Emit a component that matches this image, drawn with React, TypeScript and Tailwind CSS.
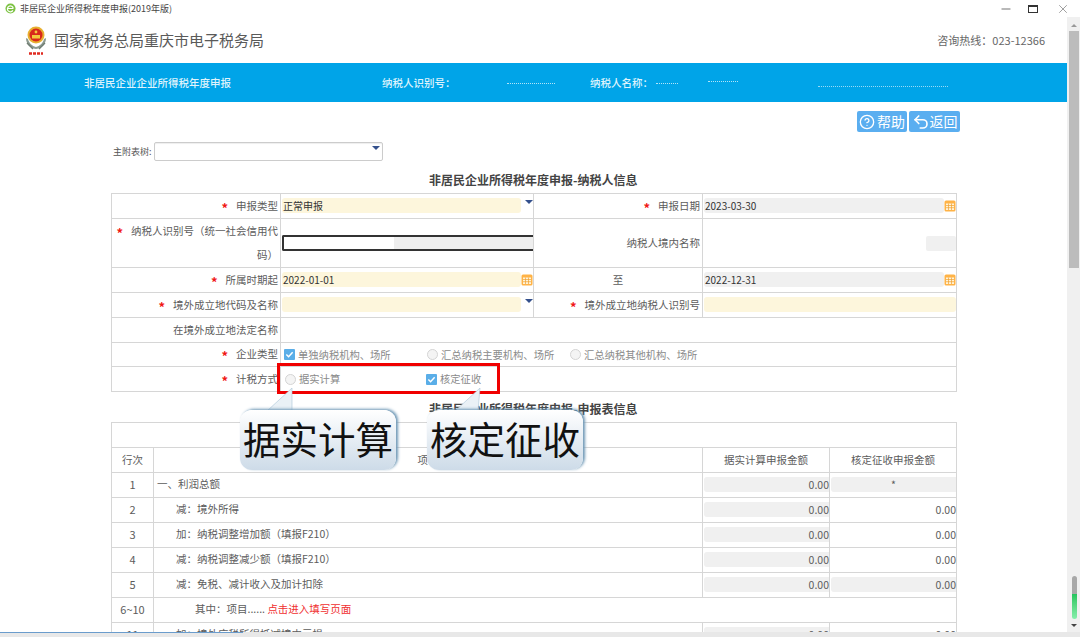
import { CircleHelp, Undo2, Minus, X } from 'lucide-react';
import type { ReactNode } from 'react';

const font = { fontFamily: '"Microsoft YaHei", "Noto Sans CJK SC", "Noto Sans", sans-serif' };

function Star() {
    return <span className="mr-[8px] inline-block align-[-3px] text-[13px] font-bold leading-none text-[#f01818]">*</span>;
}

function Calendar() {
    return (
        <svg viewBox="0 0 12 12" className="h-3 w-3 shrink-0">
            <rect x="0.5" y="0.5" width="11" height="11" rx="1.5" fill="#ffb347" />
            <rect x="2" y="3.5" width="8" height="6.5" fill="#fff3d8" />
            <path d="M2 5.5h8M2 7.7h8M4.5 3.5v6.5M7.5 3.5v6.5" stroke="#f0a030" strokeWidth="0.7" />
        </svg>
    );
}

function Caret() {
    return <span className="mb-2 ml-1 h-0 w-0 shrink-0 border-x-[4px] border-t-[4px] border-x-transparent border-t-[#34508c]" />;
}

function Field({ tone, children, tail }: { tone: 'yellow' | 'gray'; children?: ReactNode; tail?: ReactNode }) {
    return (
        <div className="flex items-center pb-[1px] pl-[1px]">
            <div className={`h-[15px] flex-1 truncate rounded-[3px] pl-[1px] text-[10px] leading-[15px] text-[#333] ${tone === 'yellow' ? 'bg-[#fdf6dc]' : 'bg-[#f0f0f0]'}`}>
                {children}
            </div>
            {tail}
        </div>
    );
}

function Check({ on, label, className = '' }: { on?: boolean; label: string; className?: string }) {
    return (
        <span className={`inline-flex items-center gap-[3px] text-[10.3px] text-[#8a8a8a] ${className}`}>
            {on ? (
                <span className="flex h-[11px] w-[11px] items-center justify-center rounded-[1px] bg-[#5aaee8]">
                    <svg viewBox="0 0 10 10" className="h-[9px] w-[9px]">
                        <path d="M1.5 5l2.5 2.5L8.5 2.5" stroke="#fff" strokeWidth="1.6" fill="none" />
                    </svg>
                </span>
            ) : (
                <span className="h-[11px] w-[11px] rounded-full border border-[#d4d4d4] bg-[#f4f4f4]" />
            )}
            {label}
        </span>
    );
}

const labelCell = 'border-[1.5px] border-[#d6d6d6] pr-[2px] text-right align-middle text-[10.5px] text-[#5c5c5c]';
const fieldCell = 'border-[1.5px] border-[#d6d6d6] p-0 align-middle';

function InfoTable() {
    return (
        <table className="ml-[111px] w-[845px] table-fixed border-collapse">
            <colgroup>
                <col className="w-[169px]" />
                <col className="w-[253px]" />
                <col className="w-[169px]" />
                <col className="w-[254px]" />
            </colgroup>
            <tbody>
                <tr className="h-[25px]">
                    <td className={labelCell}><Star />申报类型</td>
                    <td className={fieldCell}><Field tone="yellow" tail={<Caret />}>正常申报</Field></td>
                    <td className={labelCell}><Star />申报日期</td>
                    <td className={fieldCell}><Field tone="gray" tail={<Calendar />}>2023-03-30</Field></td>
                </tr>
                <tr className="h-[49px]">
                    <td className={`${labelCell} leading-[24px]`}><Star />纳税人识别号（统一社会信用代码）</td>
                    <td className={fieldCell}>
                        <div className="ml-[1px] flex h-[16px] rounded-l-[2px] border-y-2 border-l-2 border-[#333] bg-[#eeeeee]">
                            <div className="w-[110px] bg-white" />
                        </div>
                    </td>
                    <td className={labelCell}>纳税人境内名称</td>
                    <td className={fieldCell}>
                        <div className="ml-[1px] flex h-[15px] justify-end bg-white">
                            <div className="w-[30px] rounded-[2px] bg-[#f0f0f0]" />
                        </div>
                    </td>
                </tr>
                <tr className="h-[25px]">
                    <td className={labelCell}><Star />所属时期起</td>
                    <td className={fieldCell}><Field tone="yellow" tail={<Calendar />}>2022-01-01</Field></td>
                    <td className={`${labelCell} !pr-0 !text-center`}>至</td>
                    <td className={fieldCell}><Field tone="gray" tail={<Calendar />}>2022-12-31</Field></td>
                </tr>
                <tr className="h-[25px]">
                    <td className={labelCell}><Star />境外成立地代码及名称</td>
                    <td className={fieldCell}><Field tone="yellow" tail={<Caret />} /></td>
                    <td className={labelCell}><Star />境外成立地纳税人识别号</td>
                    <td className={fieldCell}><Field tone="yellow" /></td>
                </tr>
                <tr className="h-[25px]">
                    <td className={labelCell}>在境外成立地法定名称</td>
                    <td colSpan={3} className={fieldCell} />
                </tr>
                <tr className="h-[24px]">
                    <td className={`${labelCell} pb-[1px]`}><Star />企业类型</td>
                    <td colSpan={3} className={fieldCell}>
                        <div className="flex pl-[3px]">
                            <Check on label="单独纳税机构、场所" className="w-[143px]" />
                            <Check label="汇总纳税主要机构、场所" className="w-[143px]" />
                            <Check label="汇总纳税其他机构、场所" />
                        </div>
                    </td>
                </tr>
                <tr className="h-[25px]">
                    <td className={labelCell}><Star />计税方式</td>
                    <td colSpan={3} className={fieldCell}>
                        <div className="flex pl-[4px]">
                            <Check label="据实计算" className="w-[141px]" />
                            <Check on label="核定征收" />
                        </div>
                    </td>
                </tr>
            </tbody>
        </table>
    );
}

const rows = [
    { no: '1', name: '一、利润总额', indent: 'pl-[3px]', a: '0.00', b: '*', bGray: true },
    { no: '2', name: '减：境外所得', indent: 'pl-[22px]', a: '0.00', b: '0.00' },
    { no: '3', name: '加：纳税调整增加额（填报F210）', indent: 'pl-[22px]', a: '0.00', b: '0.00' },
    { no: '4', name: '减：纳税调整减少额（填报F210）', indent: 'pl-[22px]', a: '0.00', b: '0.00' },
    { no: '5', name: '减：免税、减计收入及加计扣除', indent: 'pl-[22px]', a: '0.00', b: '0.00', bGray: true },
];

const cell = 'border-[1.5px] border-[#d6d6d6] px-0 pt-0 pb-[2px] text-[10.5px] text-[#5c5c5c]';

function Amount({ gray, children }: { gray?: boolean; children: ReactNode }) {
    return (
        <div className={`ml-[1px] h-[15px] rounded-l-[3px] text-[10.5px] leading-[15px] text-[#5c5c5c] ${gray ? 'bg-[#f0f0f0]' : ''} ${children === '*' ? 'text-center' : 'text-right'}`}>
            {children}
        </div>
    );
}

function ReportTable() {
    return (
        <table className="ml-[111px] w-[845px] table-fixed border-collapse">
            <colgroup>
                <col className="w-[42px]" />
                <col className="w-[549px]" />
                <col className="w-[127px]" />
                <col className="w-[127px]" />
            </colgroup>
            <tbody>
                <tr className="h-[25px]">
                    <td colSpan={4} className={cell} />
                </tr>
                <tr className="h-[25px]">
                    <td className={`${cell} !pb-0 text-center`}>行次</td>
                    <td className={`${cell} !pb-0 text-center`}>项目</td>
                    <td className={`${cell} !pb-0 text-center`}>据实计算申报金额</td>
                    <td className={`${cell} !pb-0 text-center`}>核定征收申报金额</td>
                </tr>
                {rows.map((r) => (
                    <tr key={r.no} className="h-[25px]">
                        <td className={`${cell} text-center text-[11px]`}>{r.no}</td>
                        <td className={`${cell} ${r.indent}`}>{r.name}</td>
                        <td className={cell}><Amount gray>{r.a}</Amount></td>
                        <td className={cell}><Amount gray={r.bGray}>{r.b}</Amount></td>
                    </tr>
                ))}
                <tr className="h-[25px]">
                    <td className={`${cell} text-center text-[11px]`}>6~10</td>
                    <td colSpan={3} className={`${cell} pl-[41px]`}>
                        其中：项目...... <span className="text-[#f03030]">点击进入填写页面</span>
                    </td>
                </tr>
                <tr className="h-[25px]">
                    <td className={`${cell} text-center text-[11px]`}>11</td>
                    <td className={`${cell} pl-[22px]`}>加：境外应税所得抵减境内亏损</td>
                    <td className={cell}><Amount gray>0.00</Amount></td>
                    <td className={cell}><Amount>0.00</Amount></td>
                </tr>
            </tbody>
        </table>
    );
}

function Callout({ text, className, tail }: { text: string; className: string; tail: string }) {
    return (
        <div className={`absolute top-[388px] h-[82px] w-[156px] ${className}`}>
            <svg className="absolute left-0 top-0 h-[24px] w-[156px]" viewBox="0 0 156 24">
                <polygon points={tail} fill="#eaf1f6" stroke="#a9c4d6" strokeWidth="0.6" />
            </svg>
            <div className="absolute inset-x-0 bottom-0 flex h-[60px] items-center justify-center rounded-[12px] bg-gradient-to-b from-[#ffffff] to-[#cddbe8] pb-[5px] text-[37.5px] leading-none text-[#111] shadow-[2px_-1px_3px_#6d97b5]">
                {text}
            </div>
        </div>
    );
}

function Emblem() {
    return (
        <svg viewBox="0 0 24 32" className="h-[32px] w-[24px]">
            <path d="M2 14c0 6 4 10 10 11 6-1 10-5 10-11l-2 1c-1 4-4 7-8 8-4-1-7-4-8-8z" fill="#8d9a90" />
            <path d="M3 19l6 6M21 19l-6 6" stroke="#6e7c72" strokeWidth="1.4" />
            <circle cx="12" cy="11" r="8.5" fill="#e8b030" />
            <circle cx="12" cy="11" r="6.5" fill="#d8281c" />
            <rect x="8" y="11" width="8" height="3.5" fill="#f3c83c" />
            <circle cx="12" cy="8" r="1.4" fill="#f3c83c" />
            <path d="M5 29.5h14" stroke="#e02a20" strokeWidth="2.4" strokeDasharray="3 1" />
        </svg>
    );
}

export default function App() {
    return (
        <div className="relative flex h-[637px] w-[1080px] flex-col overflow-hidden bg-white" style={font}>
            {/* Window title */}
            <div className="flex h-[17px] shrink-0 items-center pl-[5px]">
                <svg viewBox="0 0 12 12" className="mr-[4px] h-[11px] w-[11px]">
                    <circle cx="6" cy="6" r="5.5" fill="#7cc242" />
                    <path d="M3 6h6M8.6 8A3.2 3.2 0 1 1 9 6" stroke="#fff" strokeWidth="1.3" fill="none" />
                </svg>
                <span className="text-[9px] text-[#444]">非居民企业所得税年度申报(2019年版)</span>
                <div className="ml-auto flex items-center pr-[10px] text-[#555]">
                    <Minus className="mr-[15px] h-[14px] w-[14px]" strokeWidth={1.4} />
                    <span className="mr-[18px] h-[8px] w-[10px] border border-t-2 border-[#333]" />
                    <X className="h-[14px] w-[14px] text-[#777]" strokeWidth={1.2} />
                </div>
            </div>

            <div className="flex min-h-0 flex-1">
                <div className="relative min-w-0 flex-1 overflow-hidden">
                    {/* Site header */}
                    <div className="flex h-[46px] items-center pl-[24px] pr-[22px]">
                        <Emblem />
                        <span className="ml-[6px] text-[15px] text-[#5a5a5a]">国家税务总局重庆市电子税务局</span>
                        <span className="ml-auto text-[11px] text-[#666]">咨询热线：023-12366</span>
                    </div>
                    <div className="flex h-[39px] items-center bg-[#00a4e8] pl-[84px] text-[10.5px] font-medium text-[#dff3fc]">
                        <span className="w-[298px]">非居民企业企业所得税年度申报</span>
                        <span className="w-[125px]">纳税人识别号：</span>
                        <span className="mr-[35px] h-[2px] w-[48px] border-b border-dotted border-white/70" />
                        <span className="w-[66px]">纳税人名称：</span>
                        <span className="mr-[30px] h-[2px] w-[22px] border-b border-dotted border-white/70" />
                        <span className="mr-[80px] mt-[-4px] h-[2px] w-[30px] border-b border-dotted border-white/70" />
                        <span className="mt-[6px] h-[2px] w-[130px] border-b border-dotted border-white/60" />
                    </div>

                    {/* Toolbar */}
                    <div className="mt-[9px] flex h-[21px] justify-end gap-[2px] pr-[107px]">
                        <button className="flex w-[50px] items-center justify-center gap-[2px] rounded-[2px] bg-[#5aaef0] text-[14px] text-white">
                            <CircleHelp className="h-[16px] w-[16px]" strokeWidth={2} />
                            帮助
                        </button>
                        <button className="flex w-[51px] items-center justify-center rounded-[2px] bg-[#5aaef0] text-[14px] text-white">
                            <Undo2 className="h-[18px] w-[18px]" strokeWidth={2.2} />
                            返回
                        </button>
                    </div>

                    <div className="mt-[10px] flex h-[19px] items-center pl-[113px]">
                        <span className="w-[41px] text-[9px] text-[#555]">主附表树:</span>
                        <div className="flex h-[19px] w-[229px] items-center justify-end rounded-[2px] border border-[#cccccc] pr-[2px] shadow-[inset_0_1px_1px_#eee]">
                            <Caret />
                        </div>
                    </div>

                    <h2 className="ml-[429px] mt-[11px] h-[21px] text-[12px] font-bold leading-[16px] text-[#444]">非居民企业所得税年度申报-纳税人信息</h2>
                    <InfoTable />
                    <h2 className="ml-[429px] mt-[9px] h-[21px] text-[12px] font-bold leading-[16px] text-[#444]">非居民企业所得税年度申报-申报表信息</h2>
                    <ReportTable />
                </div>

                {/* Scrollbar */}
                <div className="flex w-[13px] shrink-0 flex-col items-center bg-[#f0f0f0] pl-[1px]">
                    <div className="mt-[7px] h-0 w-0 border-x-[3px] border-b-[3px] border-x-transparent border-b-[#999]" />
                    <div className="mt-[4px] h-[237px] w-[10px] bg-[#bcbcbc]" />
                    <div className="mt-[308px] flex h-[43px] w-[5px] flex-col overflow-hidden rounded-full">
                        <div className="h-[18px] bg-[#a8a8a8]" />
                        <div className="flex-1 bg-gradient-to-b from-[#22c55e] to-[#86efac]" />
                    </div>
                    <div className="mt-[5px] h-0 w-0 border-x-[3px] border-t-[3px] border-x-transparent border-t-[#444]" />
                </div>
            </div>

            {/* Bottom progress strip */}
            <div className="flex h-[5px] shrink-0 bg-[#e8e8e8]">
                <div className="h-[1px] w-[243px] bg-[#6a9ccc]" />
            </div>

            {/* Highlight and callouts laid over the form */}
            <div className="absolute left-[277px] top-[363px] h-[31px] w-[223px] border-[3px] border-[#f00000]" />
            <Callout text="据实计算" className="left-[240px]" tail="52,0 27,23 52,23" />
            <Callout text="核定征收" className="left-[427px]" tail="53,0 28,23 51,23" />
        </div>
    );
}
